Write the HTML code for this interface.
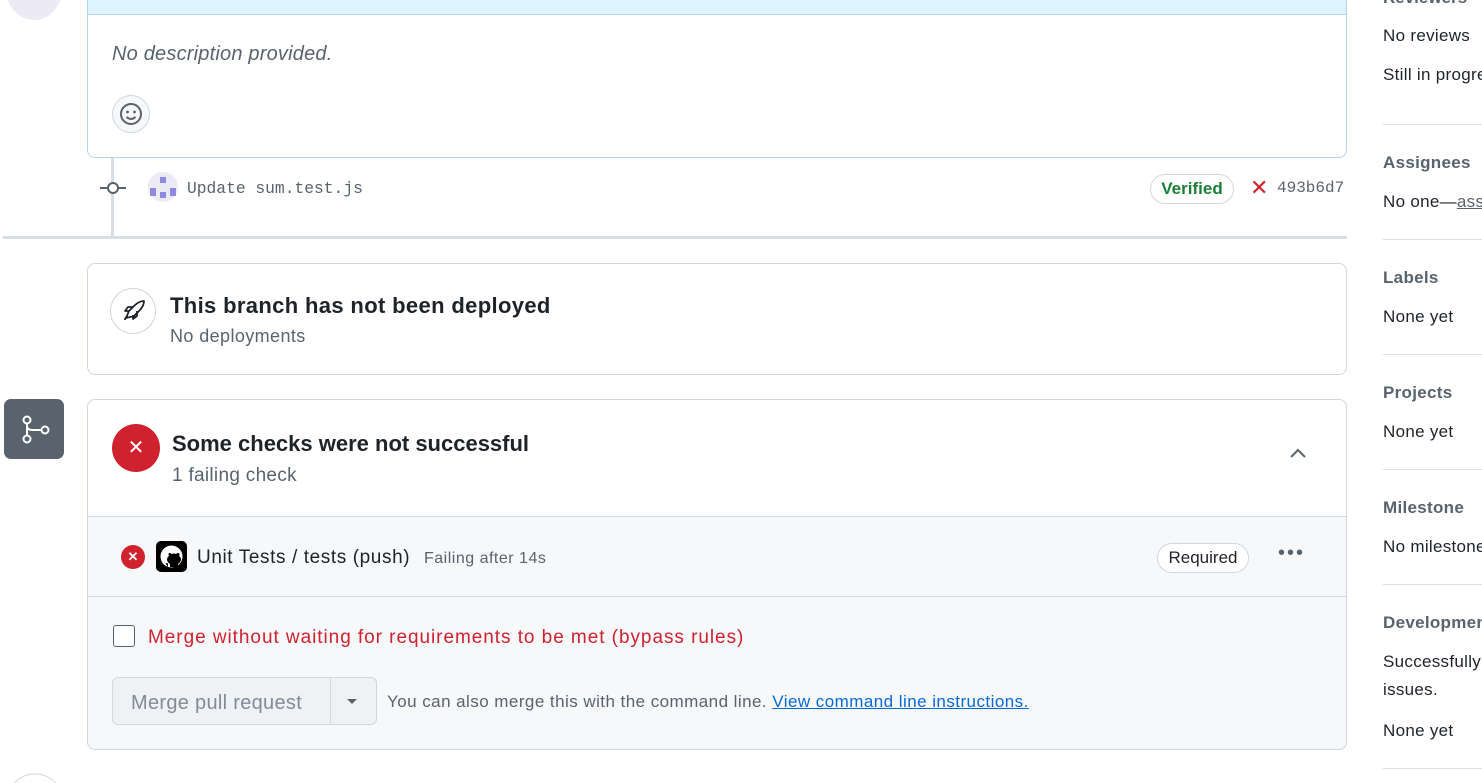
<!DOCTYPE html><html><head><style>
html,body{margin:0;width:1482px;height:783px;overflow:hidden}
body{background:#fff;font-family:"Liberation Sans",sans-serif;color:#1f2328;position:relative}
#w{position:absolute;left:0;top:0;width:1482px;height:783px;overflow:hidden}
.a{position:absolute}
.box{position:absolute;border:1px solid #d0d7de;border-radius:8px;background:#fff}
.sb{position:absolute;left:1383px;font-size:17px;white-space:nowrap;letter-spacing:0.3px}
.sbh{font-weight:bold;color:#59636e;font-size:17px}
.hr{position:absolute;left:1383px;width:99px;height:1px;background:#d8dee4}
.mono{font-family:"Liberation Mono",monospace}
</style></head><body><div id="w">
<div class="a" style="left:6px;top:0;width:56px;height:20px;overflow:hidden"><div class="a" style="left:0;top:-42px;width:56px;height:62px;border-radius:50%;background:#eceaf4;overflow:hidden"><div class="a" style="left:24px;top:30px;width:10px;height:10px;background:#8e8ae0"></div><div class="a" style="left:6px;top:30px;width:10px;height:10px;background:#8e8ae0"></div><div class="a" style="left:42px;top:30px;width:10px;height:10px;background:#8e8ae0"></div></div></div>
<div class="a" style="left:87px;top:0;width:1260px;height:158px;overflow:hidden"><div class="box" style="left:0;top:-10px;width:1258px;height:166px;border-color:#b6d4ea;overflow:hidden">
<div class="a" style="left:0;top:0;width:100%;height:23px;background:#ddf4ff;border-bottom:1px solid #b6d4ea"></div>
<div class="a" style="left:24px;top:52px;font-size:20px;font-style:italic;color:#59636e;letter-spacing:0.2px">No description provided.</div>
<div class="a" style="left:24px;top:104px;width:36px;height:36px;border:1px solid #d0d7de;border-radius:50%;background:#f6f8fa"><svg width="36" height="36" viewBox="0 0 36 36"><circle cx="18" cy="18" r="10" fill="none" stroke="#59636e" stroke-width="2"/><circle cx="14.5" cy="16" r="1.4" fill="#59636e"/><circle cx="21.5" cy="16" r="1.4" fill="#59636e"/><path d="M13.5 21q4.5 4 9 0" fill="none" stroke="#59636e" stroke-width="2"/></svg></div>
</div></div>
<div class="a" style="left:111px;top:158px;width:3px;height:80px;background:#d8dee4"></div>
<svg class="a" style="left:100px;top:179px" width="26" height="18"><line x1="0" y1="9" x2="26" y2="9" stroke="#59636e" stroke-width="2"/><circle cx="13" cy="9" r="5" fill="#fff" stroke="#59636e" stroke-width="2"/></svg>
<div class="a" style="left:148px;top:172px;width:30px;height:30px;border-radius:50%;background:#eceaf4"><div class="a" style="left:12px;top:5px;width:6px;height:6px;background:#8e8ae0"></div><div class="a" style="left:2px;top:16px;width:6px;height:8px;background:#8e8ae0"></div><div class="a" style="left:12px;top:20px;width:6px;height:6px;background:#8e8ae0"></div><div class="a" style="left:22px;top:16px;width:6px;height:8px;background:#8e8ae0"></div></div>
<div class="a mono" style="left:187px;top:179px;font-size:16.3px;color:#59636e">Update sum.test.js</div>
<div class="a" style="left:1150px;top:174px;width:82px;height:28px;border:1px solid #d0d7de;border-radius:15px;color:#1a7f37;font-size:17px;font-weight:bold;text-align:center;line-height:28px">Verified</div>
<div class="a" style="left:1250px;top:175px;color:#cf222e;font-size:22px">✕</div>
<div class="a mono" style="left:1277px;top:179px;font-size:16px;color:#59636e">493b6d7</div>
<div class="a" style="left:3px;top:236px;width:1344px;height:3px;background:#d8dee4"></div>
<div class="box" style="left:87px;top:263px;width:1258px;height:110px">
<div class="a" style="left:22px;top:24px;width:44px;height:44px;border:1px solid #d0d7de;border-radius:50%"><svg width="44" height="44" viewBox="0 0 44 44"><path d="M15 29l3-7 5-5q5-5 10-5q0 5-5 10l-5 5zM18 22h-4l3-4h5M22 26v4l4-3v-5M14 31q0-3 3-3" fill="none" stroke="#1f2328" stroke-width="1.8" stroke-linejoin="round"/></svg></div>
<div class="a" style="left:82px;top:29px;font-size:22px;font-weight:bold;letter-spacing:0.35px">This branch has not been deployed</div>
<div class="a" style="left:82px;top:62px;font-size:18px;color:#59636e;letter-spacing:0.4px">No deployments</div>
</div>
<div class="a" style="left:4px;top:399px;width:60px;height:60px;border-radius:7px;background:#59636e"><svg width="60" height="60" viewBox="0 0 60 60"><g fill="none" stroke="#fff" stroke-width="2"><circle cx="23" cy="21" r="3.5"/><circle cx="23" cy="40" r="3.5"/><circle cx="41" cy="31" r="3.5"/><path d="M23 24.5v12M23 27q0 4 6 4h8.5"/></g></svg></div>
<div class="box" style="left:87px;top:399px;width:1258px;height:349px;overflow:hidden;background:#f6f8fa">
<div class="a" style="left:0;top:0;width:100%;height:116px;background:#fff;border-bottom:1px solid #d0d7de"></div>
<div class="a" style="left:24px;top:24px;width:48px;height:48px;border-radius:50%;background:#cf222e;color:#fff;text-align:center;line-height:48px;font-size:20px">✕</div>
<div class="a" style="left:84px;top:31px;font-size:22px;font-weight:bold">Some checks were not successful</div>
<div class="a" style="left:84px;top:65px;font-size:19px;color:#59636e;letter-spacing:0.3px">1 failing check</div>
<svg class="a" style="left:1200px;top:44px" width="20" height="20"><path d="M3 13l7-7 7 7" fill="none" stroke="#59636e" stroke-width="2"/></svg>
<div class="a" style="left:33px;top:145px;width:24px;height:24px;border-radius:50%;background:#cf222e;color:#fff;text-align:center;line-height:24px;font-size:13px;font-weight:bold">✕</div>
<div class="a" style="left:68px;top:141px;width:31px;height:31px;border-radius:5px;background:#000"><svg width="31" height="31" viewBox="0 0 31 31"><circle cx="15.5" cy="15.5" r="11" fill="#fff"/><path d="M12 26v-4q-3 1-4-2m6 6v-3q-2-1-3-4 0-3 2-4-1-2 0-3 2 0 3 1 2-1 4 0 1-1 3-1 1 1 0 3 2 1 2 4-1 3-3 4v3.5" fill="#000"/></svg></div>
<div class="a" style="left:109px;top:147px;font-size:19px;letter-spacing:0.6px">Unit Tests / tests (push)</div>
<div class="a" style="left:336px;top:150px;font-size:16px;color:#59636e;letter-spacing:0.5px">Failing after 14s</div>
<div class="a" style="left:1069px;top:143px;width:90px;height:28px;border:1px solid #d0d7de;border-radius:15px;background:#fff;font-size:17px;text-align:center;line-height:28px">Required</div>
<div class="a" style="left:1190px;top:142px;font-size:20px;letter-spacing:2px;color:#59636e">•••</div>
<div class="a" style="left:0;top:196px;width:100%;height:1px;background:#d0d7de"></div>
<div class="a" style="left:25px;top:225px;width:20px;height:20px;border:1.5px solid #59636e;border-radius:3px;background:#fff"></div>
<div class="a" style="left:60px;top:227px;font-size:19px;color:#cf222e;letter-spacing:0.95px">Merge without waiting for requirements to be met (bypass rules)</div>
<div class="a" style="left:24px;top:277px;width:263px;height:46px;border:1px solid #d0d7de;border-radius:6px;background:#eff2f5"></div>
<div class="a" style="left:242px;top:277px;width:1px;height:48px;background:#d0d7de"></div>
<div class="a" style="left:43px;top:292px;font-size:20px;color:#818b98;letter-spacing:0.3px">Merge pull request</div>
<svg class="a" style="left:257px;top:296px" width="14" height="10"><path d="M2 3h10l-5 5z" fill="#59636e"/></svg>
<div class="a" style="left:299px;top:292px;font-size:17px;color:#59636e;letter-spacing:0.45px;white-space:nowrap">You can also merge this with the command line. <span style="color:#0969da;text-decoration:underline">View command line instructions.</span></div>
</div>
<svg class="a" style="left:5px;top:772px" width="60" height="11"><circle cx="30" cy="30" r="28" fill="#fff" stroke="#d0d7de"/></svg>
<div class="a" style="left:1383px;top:0;width:99px;height:8px;overflow:hidden"><div class="a sbh" style="left:0;top:-12px;font-size:17px;white-space:nowrap">Reviewers</div></div>
<div class="sb" style="top:26px">No reviews</div>
<div class="sb" style="top:65px;width:99px;overflow:hidden">Still in progress?</div>
<div class="hr" style="top:124px"></div>
<div class="sb sbh" style="top:153px">Assignees</div>
<div class="sb" style="top:192px;width:99px;overflow:hidden">No one—<span style="text-decoration:underline;color:#59636e">assign yourself</span></div>
<div class="hr" style="top:239px"></div>
<div class="sb sbh" style="top:268px">Labels</div>
<div class="sb" style="top:307px">None yet</div>
<div class="hr" style="top:354px"></div>
<div class="sb sbh" style="top:383px">Projects</div>
<div class="sb" style="top:422px">None yet</div>
<div class="hr" style="top:469px"></div>
<div class="sb sbh" style="top:498px">Milestone</div>
<div class="sb" style="top:537px;width:99px;overflow:hidden">No milestone</div>
<div class="hr" style="top:584px"></div>
<div class="sb sbh" style="top:613px;width:99px;overflow:hidden">Development</div>
<div class="sb" style="top:652px;width:99px;overflow:hidden">Successfully merging</div>
<div class="sb" style="top:680px">issues.</div>
<div class="sb" style="top:721px">None yet</div>
<div class="hr" style="top:768px"></div>
</div></body></html>
